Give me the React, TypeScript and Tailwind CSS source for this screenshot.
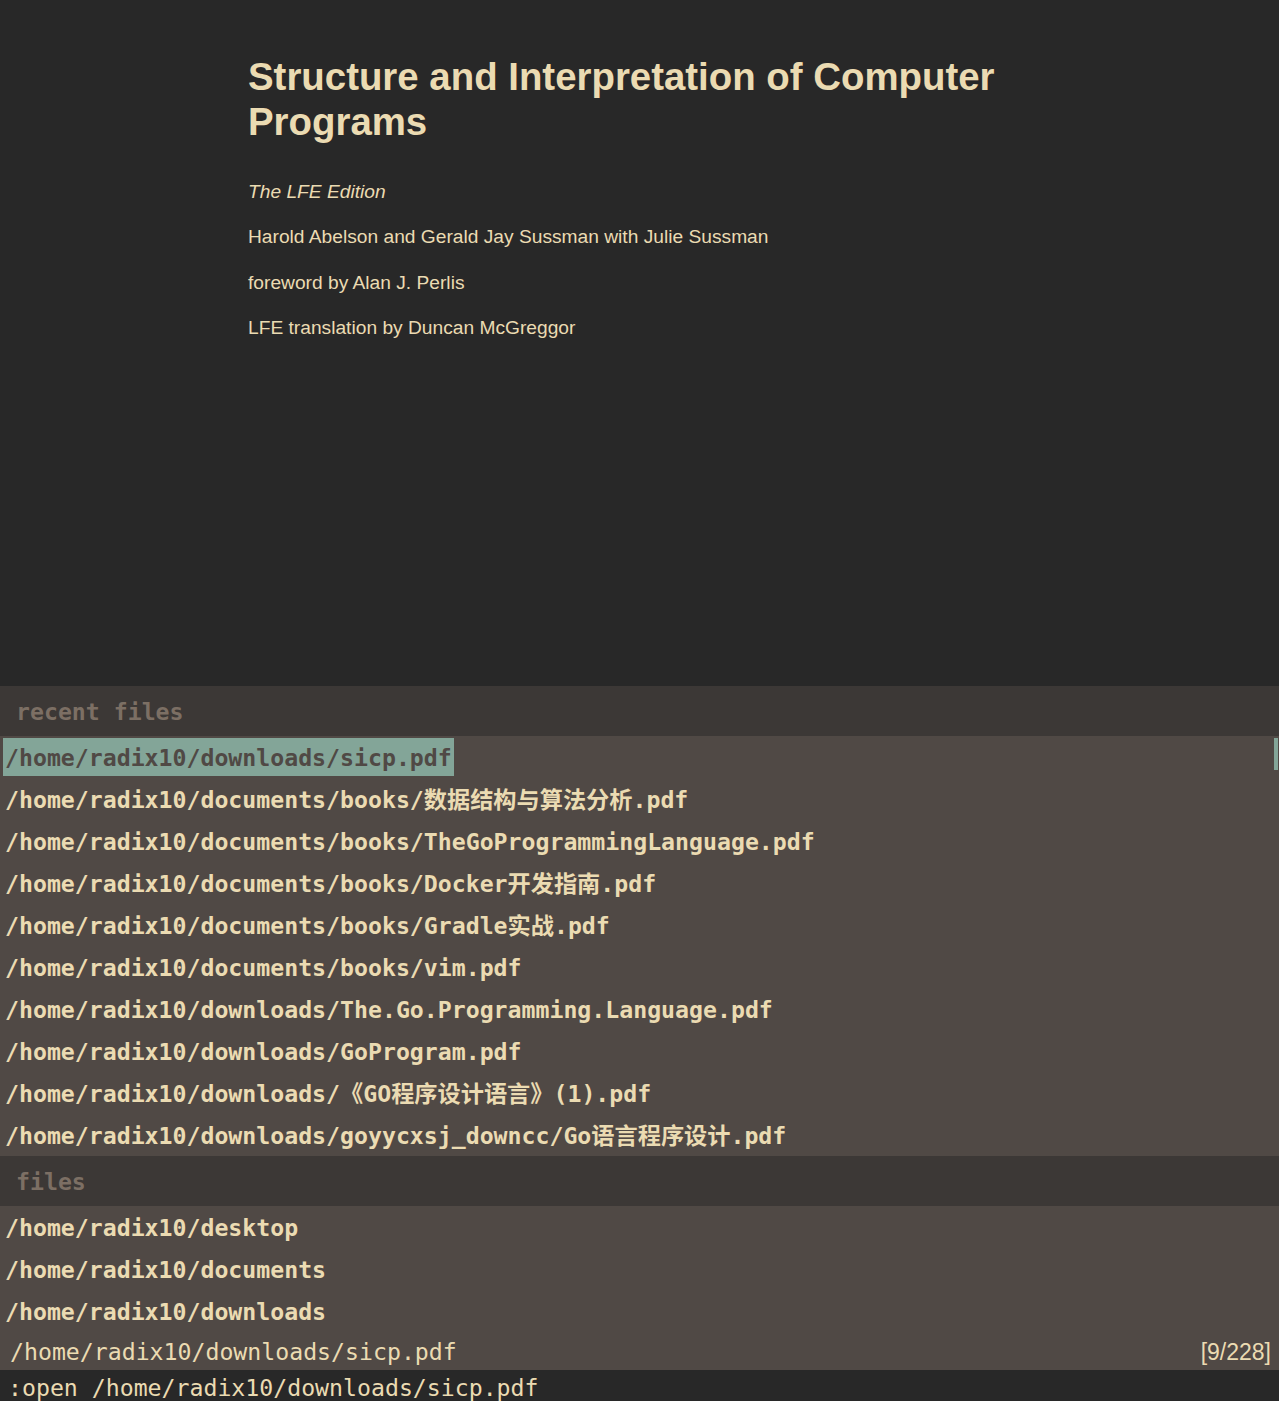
const mono = "font-['DejaVu_Sans_Mono','Noto_Sans_CJK_SC',monospace]";

const recent = [
  "/home/radix10/downloads/sicp.pdf",
  "/home/radix10/documents/books/数据结构与算法分析.pdf",
  "/home/radix10/documents/books/TheGoProgrammingLanguage.pdf",
  "/home/radix10/documents/books/Docker开发指南.pdf",
  "/home/radix10/documents/books/Gradle实战.pdf",
  "/home/radix10/documents/books/vim.pdf",
  "/home/radix10/downloads/The.Go.Programming.Language.pdf",
  "/home/radix10/downloads/GoProgram.pdf",
  "/home/radix10/downloads/《GO程序设计语言》(1).pdf",
  "/home/radix10/downloads/goyycxsj_downcc/Go语言程序设计.pdf",
];

const files = [
  "/home/radix10/desktop",
  "/home/radix10/documents",
  "/home/radix10/downloads",
];

function Header({ title }: { title: string }) {
  return (
    <div className={`h-[50px] shrink-0 bg-[#3c3836] flex items-center pl-4 pt-[2px] text-[23.2px] font-bold text-[#7c6f64] ${mono}`}>
      {title}
    </div>
  );
}

function Row({ text, selected }: { text: string, selected?: boolean }) {
  const tone = selected ? "bg-[#83a598] text-[#504945]" : "text-[#ebdbb2]";
  return (
    <div className={`h-[42px] shrink-0 flex items-start pl-[3px] text-[23.2px] font-bold ${mono}`}>
      <span className={`mt-[2px] h-[38px] flex items-center pt-[3px] px-[2px] ${tone}`}>
        {text}
      </span>
    </div>
  );
}

export default function App() {
  return (
    <div className="w-[1279px] h-[1401px] bg-[#282828] flex flex-col overflow-hidden">
      <div className="h-[686px] shrink-0 pl-[248px] pt-[54px] font-['Liberation_Sans',Arial,sans-serif] text-[#ebdbb2]">
        <h1 className="text-[38.4px] leading-[45px] font-bold w-[800px]">
          Structure and Interpretation of Computer Programs
        </h1>
        <div className="mt-[37px] flex flex-col gap-[23.3px] text-[19.2px] leading-[22px]">
          <p className="italic">The LFE Edition</p>
          <p>Harold Abelson and Gerald Jay Sussman with Julie Sussman</p>
          <p>foreword by Alan J. Perlis</p>
          <p>LFE translation by Duncan McGreggor</p>
        </div>
      </div>

      <div className="bg-[#504945] shrink-0 flex flex-col">
        <Header title="recent files" />
        <div className="relative">
          {recent.map((r, i) => (
            <Row key={r} text={r} selected={i === 0} />
          ))}
          <div className="absolute right-[1px] top-[2px] w-[4px] h-[32px] bg-[#83a598]" />
        </div>
        <Header title="files" />
        {files.map((f) => (
          <Row key={f} text={f} />
        ))}
        <div className="h-[38px] flex items-center justify-between pl-[10px] pr-[8px] pt-[3px] text-[#ebdbb2]">
          <span className={`text-[23.2px] ${mono}`}>/home/radix10/downloads/sicp.pdf</span>
          <span className="text-[23px] font-['Liberation_Sans',Arial,sans-serif]">[9/228]</span>
        </div>
      </div>

      <div className={`h-[31px] shrink-0 overflow-hidden bg-[#282828] pl-[8px] pt-[2px] text-[23.2px] leading-[31px] text-[#ebdbb2] ${mono}`}>
        :open /home/radix10/downloads/sicp.pdf
      </div>
    </div>
  );
}
